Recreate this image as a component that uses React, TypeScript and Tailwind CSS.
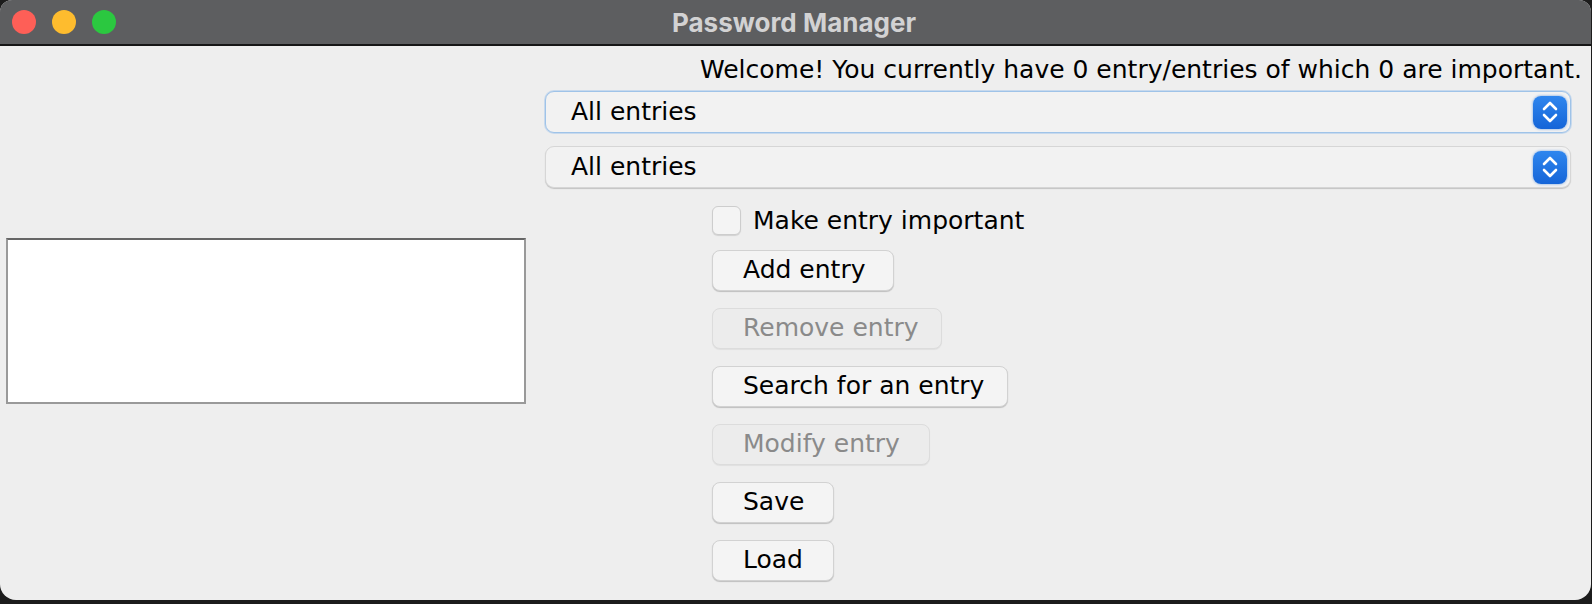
import React from "react";

const font = { fontFamily: '"DejaVu Sans", "Liberation Sans", sans-serif' };

function Stepper() {
  return (
    <div className="w-[34px] h-[33px] rounded-[8px] bg-[linear-gradient(#2f86ee,#1565d8)] shadow-[0_0_2px_1px_rgba(60,130,220,0.35)] flex items-center justify-center">
      <svg width="20" height="26" viewBox="0 0 20 26" fill="none">
        <path d="M4 10 L10 4 L16 10" stroke="white" strokeWidth="2.6" strokeLinecap="round" strokeLinejoin="round" />
        <path d="M4 16 L10 22 L16 16" stroke="white" strokeWidth="2.6" strokeLinecap="round" strokeLinejoin="round" />
      </svg>
    </div>
  );
}

function Combo({ focused }: { focused?: boolean }) {
  return (
    <div
      className={
        "ml-[8px] mr-[20px] h-[42px] rounded-[9px] bg-[#f2f2f2] flex items-center justify-between pl-[25px] pr-[3px] " +
        (focused
          ? "border border-[#9fc3e8] shadow-[0_0_0_1px_rgba(150,190,235,0.45)]"
          : "border border-[#d6d6d6] shadow-[0_1px_1px_rgba(0,0,0,0.18)]")
      }
    >
      <span className="text-[25px] leading-[30px] text-black">All entries</span>
      <Stepper />
    </div>
  );
}

function Btn({ label, w, disabled }: { label: string; w: string; disabled?: boolean }) {
  return (
    <div
      className={
        "h-[41px] rounded-[8px] flex items-center pl-[30px] pb-[1px] " +
        w +
        (disabled
          ? " bg-[#ececec] border border-[#dcdcdc] text-[#8a8a8a] shadow-[0_1px_1px_rgba(0,0,0,0.06)]"
          : " bg-[#f4f4f4] border border-[#d2d2d2] text-black shadow-[0_1px_1px_rgba(0,0,0,0.2)]")
      }
    >
      <span className="text-[25px] leading-[30px] whitespace-nowrap">{label}</span>
    </div>
  );
}

export default function App() {
  return (
    <div className="w-[1592px] h-[604px] bg-[#1c1c1c] overflow-hidden" style={font}>
      <div className="w-[1591px] h-[600px] rounded-t-[12px] rounded-b-[16px] bg-[#eeeeee] flex flex-col overflow-hidden">
        <div className="h-[46px] bg-[#5d5e60] border-b-2 border-[#161616] flex items-center relative shrink-0">
          <div className="flex items-center gap-[16px] pl-[12px]">
            <div className="w-[24px] h-[24px] rounded-full bg-[#fe5f57]" />
            <div className="w-[24px] h-[24px] rounded-full bg-[#febc2e]" />
            <div className="w-[24px] h-[24px] rounded-full bg-[#2bc840]" />
          </div>
          <div className="absolute left-0 right-0 top-0 h-[44px] flex items-center justify-center pointer-events-none">
            <span
              className="text-[26px] font-bold text-[#d2d2d3] ml-[-3px]"
              style={{ fontFamily: 'Inter, "Liberation Sans", sans-serif' }}
            >
              Password Manager
            </span>
          </div>
        </div>
        <div className="flex-1 flex">
          <div className="w-[537px] flex items-center pl-[6px] pb-[4px] shrink-0">
            <div className="w-[520px] h-[166px] bg-white border-2 border-[#999999] border-t-[#666666]" />
          </div>
          <div className="flex-1 flex flex-col pt-[9px]">
            <div className="h-[30px] flex justify-end pr-[9px]">
              <span className="text-[25px] leading-[30px] text-black whitespace-nowrap">
                Welcome! You currently have 0 entry/entries of which 0 are important.
              </span>
            </div>
            <div className="mt-[6px]">
              <Combo focused />
            </div>
            <div className="mt-[13px]">
              <Combo />
            </div>
            <div className="mt-[18px] pl-[175px] flex flex-col gap-[17px]">
              <div className="h-[29px] flex items-center gap-[12px] mb-[-2px]">
                <div className="w-[29px] h-[29px] rounded-[6px] bg-[#f4f4f4] border border-[#cdcdcd] shadow-[0_1px_1px_rgba(0,0,0,0.12)]" />
                <span className="text-[25px] leading-[30px] text-black">Make entry important</span>
              </div>
              <Btn label="Add entry" w="w-[182px]" />
              <Btn label="Remove entry" w="w-[230px]" disabled />
              <Btn label="Search for an entry" w="w-[296px]" />
              <Btn label="Modify entry" w="w-[218px]" disabled />
              <Btn label="Save" w="w-[122px]" />
              <Btn label="Load" w="w-[122px]" />
            </div>
          </div>
        </div>
      </div>
    </div>
  );
}
